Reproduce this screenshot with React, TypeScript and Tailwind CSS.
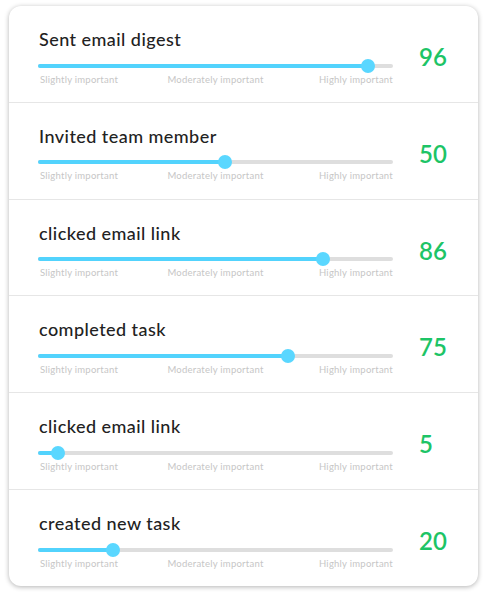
import React from "react";

const rows = [
  { title: "Sent email digest", value: 96, pos: 0.93 },
  { title: "Invited team member", value: 50, pos: 0.527 },
  { title: "clicked email link", value: 86, pos: 0.803 },
  { title: "completed task", value: 75, pos: 0.704 },
  { title: "clicked email link", value: 5, pos: 0.056 },
  { title: "created new task", value: 20, pos: 0.211 },
];

function Row({ title, value, pos, last }: { title: string; value: number; pos: number; last: boolean }) {
  return (
    <div className={`flex flex-1 pl-[29px] ${last ? "" : "border-b border-[#e6e6e6]"}`}>
      <div className="w-[355px] pt-[23px]">
        <div className="pl-[1px] text-[18px] leading-[1.2] font-medium text-[#222222] tracking-[0.45px]">{title}</div>
        <div className="relative mt-[8px] h-[14px]">
          <div className="absolute left-0 right-0 top-[5px] h-[4px] rounded-full bg-[#dedede]" />
          <div
            className="absolute left-0 top-[5px] h-[4px] rounded-full bg-[#52d3fd]"
            style={{ width: `${pos * 100}%` }}
          />
          <div
            className="absolute top-0 h-[14px] w-[14px] -translate-x-1/2 rounded-full bg-[#5ad7ff]"
            style={{ left: `${pos * 100}%` }}
          />
        </div>
        <div className="mt-[1px] grid grid-cols-3 whitespace-nowrap text-[9.5px] leading-[11px] tracking-[0.25px] text-[#c6c6c6]">
          <span className="pl-[2px] text-left">Slightly important</span>
          <span className="text-center">Moderately important</span>
          <span className="text-right">Highly important</span>
        </div>
      </div>
      <div className="pl-[26px] pt-[39px] text-[24px] leading-[24px] font-semibold text-[#1dc466]">{value}</div>
    </div>
  );
}

export default function App() {
  return (
    <div className="h-[600px] w-[487px] bg-white" style={{ fontFamily: "Lato, 'Noto Sans', sans-serif" }}>
      <div className="ml-[9px] pt-[6px]">
        <div className="flex h-[580px] w-[469px] flex-col rounded-[12px] bg-white shadow-[0_1px_5px_rgba(0,0,0,0.3)]">
          {rows.map((r, i) => (
            <Row key={i} {...r} last={i === rows.length - 1} />
          ))}
        </div>
      </div>
    </div>
  );
}
